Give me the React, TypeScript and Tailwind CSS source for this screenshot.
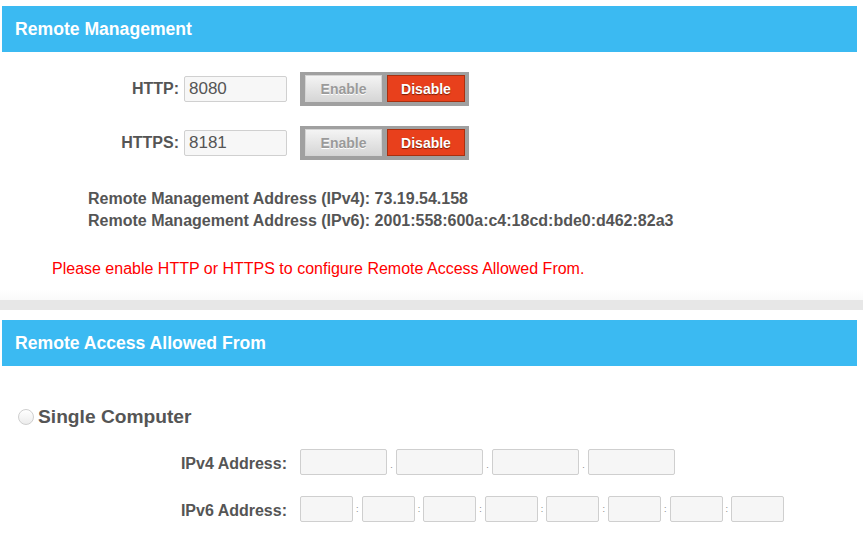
import React from "react";

function ToggleGroup() {
  return (
    <div className="ml-[13px] flex h-[34px] items-start gap-[5px] bg-[#a0a0a0] pl-[5px] pr-[4px] pt-[3px] pb-[4px]">
      <button className="h-[27px] w-[77px] border border-[#d4d4d4] bg-linear-to-b from-[#f4f4f4] to-[#d6d6d6] text-[14px] font-bold leading-none text-[#9a9a9a] [text-shadow:0_1px_0_#fff]">
        Enable
      </button>
      <button className="h-[27px] w-[78px] border border-[#a8300f] bg-[#e8401c] text-[14px] font-bold leading-none text-white [text-shadow:0_1px_1px_#7a1d05]">
        Disable
      </button>
    </div>
  );
}

function PortRow({ label, value, className = "" }: { label: string; value: string; className?: string }) {
  return (
    <div className={"flex h-[34px] items-center " + className}>
      <div className="w-[179px] text-right text-[16px] font-bold text-[#555]">{label}</div>
      <div className="ml-[5px] flex h-[26px] w-[103px] items-center rounded-[2px] border border-[#d0d0d0] bg-[#f7f7f7] pl-[4px] text-[17px] text-[#555]">
        {value}
      </div>
      <ToggleGroup />
    </div>
  );
}

function Field({ w }: { w: string }) {
  return <div className={"h-[26px] rounded-[2px] border border-[#cfcfcf] bg-[#f6f6f6] " + w} />;
}

export default function App() {
  const v4 = [0, 1, 2, 3];
  const v6 = [0, 1, 2, 3, 4, 5, 6, 7];
  return (
    <div className="h-[541px] w-[863px] overflow-hidden bg-white font-['Liberation_Sans',Arial,sans-serif] text-[#555]">
      <div className="pl-[2px] pr-[6px] pt-[6px]">
        <div className="flex h-[46px] items-center bg-[#3bbaf2] pl-[13px] text-[17.6px] font-bold text-white">
          Remote Management
        </div>
      </div>

      <div className="pt-[20px]">
        <PortRow label="HTTP:" value="8080" />
        <PortRow label="HTTPS:" value="8181" className="mt-[20px]" />
      </div>

      <div className="mt-[28px] pl-[88px] text-[16px] font-bold leading-[22px] text-[#555]">
        <div>Remote Management Address (IPv4): 73.19.54.158</div>
        <div>Remote Management Address (IPv6): 2001:558:600a:c4:18cd:bde0:d462:82a3</div>
      </div>

      <div className="mt-[26px] pl-[52px] text-[16px] leading-[22px] text-[#ff0000]">
        Please enable HTTP or HTTPS to configure Remote Access Allowed From.
      </div>

      <div className="mt-[10px] h-[10px] bg-linear-to-b from-white to-[#fafafa]" />
      <div className="h-[10px] bg-[#e7e7e7]" />

      <div className="pl-[2px] pr-[6px] pt-[10px]">
        <div className="flex h-[46px] items-center bg-[#3bbaf2] pl-[13px] text-[17.6px] font-bold text-white">
          Remote Access Allowed From
        </div>
      </div>

      <div className="mt-[39px] flex h-[24px] items-center">
        <div className="ml-[18px] h-[16px] w-[16px] rounded-full border border-[#cfcfcf] bg-linear-to-b from-white to-[#ececec]" />
        <div className="ml-[4px] text-[19.2px] font-bold text-[#555]">Single Computer</div>
      </div>

      <div className="mt-[20px] flex h-[26px] items-center">
        <div className="w-[287px] pt-[4px] text-right text-[16px] font-bold text-[#555]">IPv4 Address:</div>
        <div className="ml-[13px] flex items-center">
          {v4.map((i) => (
            <React.Fragment key={i}>
              {i > 0 && (
                <div className="flex h-[26px] w-[9px] items-end justify-center pb-[5px] text-[9px] leading-none text-[#888]">.</div>
              )}
              <Field w="w-[87px]" />
            </React.Fragment>
          ))}
        </div>
      </div>

      <div className="mt-[21px] flex h-[26px] items-center">
        <div className="w-[287px] pt-[4px] text-right text-[16px] font-bold text-[#555]">IPv6 Address:</div>
        <div className="ml-[13px] flex items-center">
          {v6.map((i) => (
            <React.Fragment key={i}>
              {i > 0 && (
                <div className="flex h-[26px] w-[8.6px] items-center justify-center text-[9px] leading-none text-[#888]">:</div>
              )}
              <Field w="w-[53px]" />
            </React.Fragment>
          ))}
        </div>
      </div>
    </div>
  );
}
